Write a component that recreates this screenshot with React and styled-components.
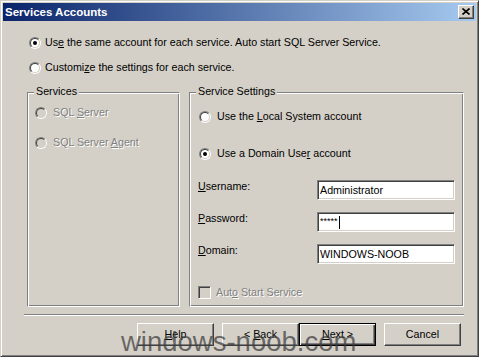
import React from "react";
import styled, { createGlobalStyle } from "styled-components";

const GlobalStyle = createGlobalStyle`
  html, body { margin: 0; padding: 0; background: #d4d0c8; }
  body { font-family: "Liberation Sans", Arial, sans-serif; }
`;

const Window = styled.div`
  position: relative;
  box-sizing: border-box;
  width: 479px;
  height: 357px;
  border: 1px solid;
  border-color: #d4d0c8 #404040 #404040 #d4d0c8;
  box-shadow: inset 1px 1px #fff, inset -1px -1px #808080;
  padding: 2px;
  background: #d4d0c8;
  display: flex;
  flex-direction: column;
  overflow: hidden;
`;

const TitleBar = styled.div`
  height: 18px;
  flex: none;
  display: flex;
  align-items: center;
  padding: 0 2px;
  background: linear-gradient(to right, #0a246a, #a6caf0);
`;

const TitleText = styled.div`
  flex: 1;
  color: #fff;
  font-weight: bold;
  font-size: 11.5px;
  line-height: 14px;
`;

const CloseButton = styled.div`
  box-sizing: border-box;
  width: 16px;
  height: 14px;
  background: #d4d0c8;
  border: 1px solid;
  border-color: #fff #404040 #404040 #fff;
  box-shadow: inset -1px -1px #808080;
  display: flex;
  align-items: center;
  justify-content: center;
  padding-bottom: 1px;
`;

const Body = styled.div`
  flex: 1;
  display: flex;
  flex-direction: column;
  padding: 15px 12px 0 21px;
  font-size: 10.7px;
  color: #000;
`;

const OptionRow = styled.div`
  display: flex;
  align-items: center;
  height: 13px;
  gap: ${(p) => p.$gap ?? 4}px;
  margin-left: ${(p) => p.$indent ?? 0}px;
  margin-top: ${(p) => p.$top ?? 0}px;
`;

const Label = styled.span`
  line-height: 13px;
  white-space: nowrap;
  color: ${(p) => (p.$disabled ? "#808080" : "#000")};
  text-shadow: ${(p) => (p.$disabled ? "1px 1px 0 #fff" : "none")};
`;

const Key = styled.span`
  text-decoration: underline;
  text-underline-offset: 1px;
`;

const RadioOuter = styled.span`
  box-sizing: border-box;
  flex: none;
  width: 12px;
  height: 12px;
  border-radius: 50%;
  border: 1px solid;
  border-color: #808080 #fff #fff #808080;
  display: flex;
`;

const RadioInner = styled.span`
  flex: 1;
  border-radius: 50%;
  border: 1px solid;
  border-color: #404040 #d4d0c8 #d4d0c8 #404040;
  background: ${(p) => (p.$disabled ? "#d4d0c8" : "#fff")};
  display: flex;
  align-items: center;
  justify-content: center;
`;

const RadioDot = styled.span`
  width: 4px;
  height: 4px;
  border-radius: 50%;
  background: #000;
`;

const CheckOuter = styled.span`
  box-sizing: border-box;
  flex: none;
  width: 13px;
  height: 13px;
  border: 1px solid;
  border-color: #808080 #fff #fff #808080;
  box-shadow: inset 1px 1px #404040, inset -1px -1px #d4d0c8;
  background: ${(p) => (p.$disabled ? "#d4d0c8" : "#fff")};
`;

const GroupRow = styled.div`
  display: flex;
  gap: 9px;
  margin-top: 18px;
  margin-left: 3px;
`;

const Group = styled.div`
  position: relative;
  box-sizing: border-box;
  width: ${(p) => p.$width}px;
  height: 215px;
  border: 1px solid;
  border-color: #808080 #fff #fff #808080;
  box-shadow: inset 1px 1px #fff, inset -1px -1px #808080;
  display: flex;
  flex-direction: column;
  padding: ${(p) => p.$pad};
`;

const GroupTitle = styled.span`
  position: absolute;
  top: -8px;
  left: 6px;
  padding: 0 2px;
  line-height: 13px;
  background: #d4d0c8;
  white-space: nowrap;
`;

const FormGrid = styled.div`
  display: grid;
  grid-template-columns: 119px 138px;
  row-gap: 12px;
  margin-top: 20px;
  margin-left: -1px;
`;

const FieldLabel = styled.span`
  line-height: 13px;
  align-self: start;
`;

const Field = styled.div`
  box-sizing: border-box;
  height: 20px;
  background: #fff;
  border: 1px solid;
  border-color: #808080 #fff #fff #808080;
  box-shadow: inset 1px 1px #404040, inset -1px -1px #d4d0c8;
  padding: 0 2px;
  display: flex;
  align-items: center;
  line-height: 13px;
  white-space: nowrap;
`;

const Masked = styled.span`
  font-size: 9px;
  letter-spacing: 0;
  line-height: 13px;
  padding-bottom: 2px;
`;

const Caret = styled.span`
  display: inline-block;
  width: 1px;
  height: 13px;
  background: #000;
  margin-left: 1px;
`;

const Separator = styled.div`
  margin-top: 7px;
  height: 0;
  border-top: 1px solid #808080;
  border-bottom: 1px solid #fff;
`;

const ButtonRow = styled.div`
  display: flex;
  justify-content: flex-end;
  gap: 8px;
  margin-top: 7px;
  padding-right: 3px;
`;

const ButtonPair = styled.div`
  display: flex;
`;

const Button = styled.div`
  box-sizing: border-box;
  width: 77px;
  height: 23px;
  background: #d4d0c8;
  border: 1px solid;
  border-color: ${(p) => (p.$default ? "#000" : "#fff #404040 #404040 #fff")};
  box-shadow: ${(p) =>
    p.$default
      ? "inset 1px 1px #fff, inset -1px -1px #404040, inset -2px -2px #808080"
      : "inset -1px -1px #808080"};
  display: flex;
  align-items: center;
  justify-content: center;
  line-height: 13px;
  white-space: nowrap;
`;

const Watermark = styled.div`
  position: absolute;
  left: 120px;
  top: 327px;
  font-size: 27.5px;
  line-height: 28px;
  color: rgba(60, 60, 60, 0.72);
  white-space: nowrap;
  pointer-events: none;
`;

function Radio({ checked, disabled }) {
  return (
    <RadioOuter>
      <RadioInner $disabled={disabled}>{checked && <RadioDot />}</RadioInner>
    </RadioOuter>
  );
}

function CloseGlyph() {
  return (
    <svg width="8" height="7" viewBox="0 0 8 7">
      <path d="M0.5 0.5 L7.5 6.5 M7.5 0.5 L0.5 6.5" stroke="#000" strokeWidth="1.6" fill="none" />
    </svg>
  );
}

export default function App() {
  return (
    <>
      <GlobalStyle />
      <Window>
        <TitleBar>
          <TitleText>Services Accounts</TitleText>
          <CloseButton>
            <CloseGlyph />
          </CloseButton>
        </TitleBar>
        <Body>
          <OptionRow $indent={5}>
            <Radio checked />
            <Label>
              Us<Key>e</Key> the same account for each service. Auto start SQL Server Service.
            </Label>
          </OptionRow>
          <OptionRow $indent={5} $top={12}>
            <Radio />
            <Label>
              Customi<Key>z</Key>e the settings for each service.
            </Label>
          </OptionRow>

          <GroupRow>
            <Group $width={153} $pad="13px 0 0 7px">
              <GroupTitle>Services</GroupTitle>
              <OptionRow $gap={6}>
                <Radio disabled />
                <Label $disabled>
                  SQL <Key>S</Key>erver
                </Label>
              </OptionRow>
              <OptionRow $gap={6} $top={17}>
                <Radio disabled />
                <Label $disabled>
                  SQL Server <Key>A</Key>gent
                </Label>
              </OptionRow>
            </Group>

            <Group $width={275} $pad="17px 0 0 9px">
              <GroupTitle>Service Settings</GroupTitle>
              <OptionRow $gap={6}>
                <Radio />
                <Label>
                  Use the <Key>L</Key>ocal System account
                </Label>
              </OptionRow>
              <OptionRow $gap={6} $top={24}>
                <Radio checked />
                <Label>
                  Use a Domain Use<Key>r</Key> account
                </Label>
              </OptionRow>
              <FormGrid>
                <FieldLabel>
                  <Key>U</Key>sername:
                </FieldLabel>
                <Field>Administrator</Field>
                <FieldLabel>
                  <Key>P</Key>assword:
                </FieldLabel>
                <Field>
                  <Masked>*****</Masked>
                  <Caret />
                </Field>
                <FieldLabel>
                  <Key>D</Key>omain:
                </FieldLabel>
                <Field>WINDOWS-NOOB</Field>
              </FormGrid>
              <OptionRow $gap={5} $indent={-1} $top={22}>
                <CheckOuter $disabled />
                <Label $disabled>
                  Aut<Key>o</Key> Start Service
                </Label>
              </OptionRow>
            </Group>
          </GroupRow>

          <Separator />

          <ButtonRow>
            <Button>
              <span>
                <Key>H</Key>elp
              </span>
            </Button>
            <ButtonPair>
              <Button>
                <span>
                  &lt; <Key>B</Key>ack
                </span>
              </Button>
              <Button $default>
                <span>
                  <Key>N</Key>ext &gt;
                </span>
              </Button>
            </ButtonPair>
            <Button>Cancel</Button>
          </ButtonRow>
        </Body>
        <Watermark>windows-noob.com</Watermark>
      </Window>
    </>
  );
}
